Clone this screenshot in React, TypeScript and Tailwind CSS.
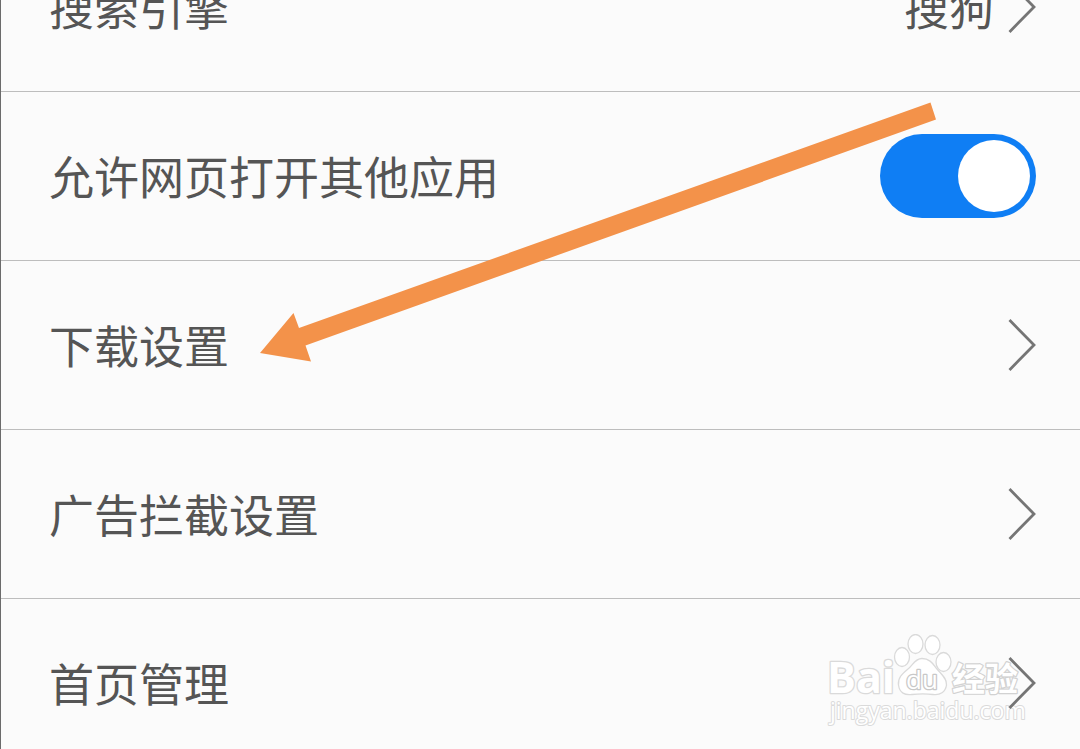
import React, { useState } from "react";

type SettingRowProps = {
  label: string;
  value?: string;
};

const ChevronIcon: React.FC = () => (
  <svg
    className="h-[52px] w-7 shrink-0"
    viewBox="0 0 28 52"
    fill="none"
    stroke="#757575"
    strokeWidth="2.8"
    aria-hidden="true"
  >
    <path d="M1.5 1L26 26L1.5 51" />
  </svg>
);

const SettingRow: React.FC<SettingRowProps> = ({ label, value }) => (
  <li className="border-b border-[#bdbdbd]">
    <button
      type="button"
      className="flex h-[168px] w-full items-center justify-between pr-11 pl-12 text-left"
    >
      <span>{label}</span>
      <span className="flex items-center gap-3.5">
        {value && <span>{value}</span>}
        <ChevronIcon />
      </span>
    </button>
  </li>
);

const SwitchRow: React.FC<{ label: string }> = ({ label }) => {
  const [checked, setChecked] = useState(true);

  return (
    <li className="flex h-[169px] items-center justify-between border-b border-[#bdbdbd] pr-11 pl-12">
      <label htmlFor="open-apps">{label}</label>
      <input
        id="open-apps"
        type="checkbox"
        role="switch"
        checked={checked}
        onChange={(e) => setChecked(e.target.checked)}
        className="flex h-[84px] w-[156px] shrink-0 cursor-pointer appearance-none items-center rounded-full bg-gray-300 p-1.5 before:size-[72px] before:rounded-full before:bg-white checked:justify-end checked:bg-[#0f7ef4]"
      />
    </li>
  );
};

const PointerArrow: React.FC = () => (
  <svg
    className="pointer-events-none absolute top-[102px] left-[258px] h-[260px] w-[678px]"
    viewBox="0 0 678 260"
    aria-hidden="true"
  >
    <path
      d="M1 251L34.5 211L40 226L671.5 0.5L677 17.5L46.5 243.5L52 259.5Z"
      fill="#f3924a"
    />
  </svg>
);

const Watermark: React.FC = () => (
  <svg
    className="pointer-events-none absolute right-[50px] bottom-[19px] h-24 w-[206px]"
    viewBox="0 0 206 96"
    fill="#ffffff"
    stroke="#dadada"
    strokeWidth="1.3"
    strokeLinejoin="round"
  >
    <g fontFamily="'Open Sans', 'Noto Sans', sans-serif" paintOrder="stroke">
      <text x="3" y="59" fontSize="43" fontWeight="700" strokeWidth="2.6">
        Bai
      </text>
      <text x="6" y="85" fontSize="23" strokeWidth="2">
        jingyan.baidu.com
      </text>
    </g>
    <ellipse cx="78" cy="23" rx="7.5" ry="9.5" />
    <ellipse cx="91.5" cy="10" rx="7.5" ry="9.5" />
    <ellipse cx="108.500" cy="11" rx="7.5" ry="9.5" />
    <ellipse cx="119.5" cy="28" rx="7.5" ry="9.5" />
    <path d="M98 24.5C91 24.5 89 31 84 35C78 40 73.500 44 74.500 51C75.500 59 81 61.500 88 60.500C96 59.500 102 59.500 109 60.500C116 61.500 121.500 58 122.500 51C123 44 117 40 113 35C109 30 106 24.500 98 24.500Z" />
    <text
      x="82"
      y="55"
      fontSize="26"
      fontFamily="'Open Sans', 'Noto Sans', sans-serif"
      stroke="#c8c8c8"
      strokeWidth="2.6"
      paintOrder="stroke"
    >
      du
    </text>
    <text
      x="128"
      y="57"
      fontSize="33"
      fontWeight="700"
      fontFamily="'Noto Sans CJK SC', sans-serif"
      stroke="#d2d2d2"
      strokeWidth="2.4"
      paintOrder="stroke"
    >
      经验
    </text>
  </svg>
);

const App: React.FC = () => {
  return (
    <main className="relative h-screen overflow-hidden border-l border-[#6b6b6b] bg-[#fbfbfb] font-['Noto_Sans_CJK_SC',sans-serif] text-[45px] leading-[64px] text-[#555555]">
      <Watermark />
      {/* the list is scrolled, its first row is cut by the top edge */}
      <ul className="relative -mt-[77px]">
        <SettingRow label="搜索引擎" value="搜狗" />
        <SwitchRow label="允许网页打开其他应用" />
        <SettingRow label="下载设置" />
        <SettingRow label="广告拦截设置" />
        <SettingRow label="首页管理" />
      </ul>
      <PointerArrow />
    </main>
  );
};

export default App;
